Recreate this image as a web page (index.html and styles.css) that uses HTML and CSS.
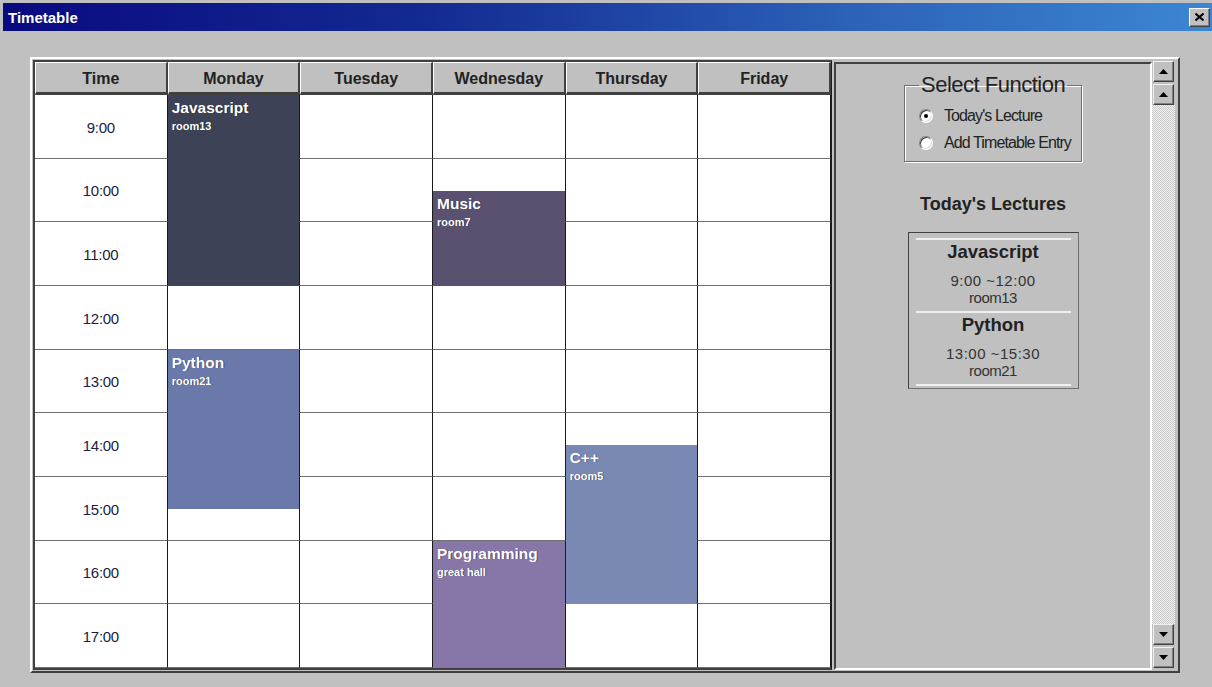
FILE: index.html
```html
<!DOCTYPE html>
<html lang="en">
<head>
    <meta charset="UTF-8">
    <title>Timetable</title>
    <link rel="stylesheet" href="styles.css">
</head>
<body>
    <div class="titlebar">
        <span class="title">Timetable</span>
        <div class="close">
            <svg width="9" height="8" viewBox="0 0 9 8"><path d="M0.5 0.5 L8.5 7.5 M8.5 0.5 L0.5 7.5" stroke="#000" stroke-width="2"/></svg>
        </div>
    </div>

    <div class="client">
        <div class="frame">
            <div class="timetable">
                <div class="tt-head">
                    <div>Time</div>
                    <div>Monday</div>
                    <div>Tuesday</div>
                    <div>Wednesday</div>
                    <div>Thursday</div>
                    <div>Friday</div>
                </div>
                <div class="tt-body">
                    <div class="tt-cells">
                        <div class="time">9:00</div><div></div><div></div><div></div><div></div><div></div>
                        <div class="time">10:00</div><div></div><div></div><div></div><div></div><div></div>
                        <div class="time">11:00</div><div></div><div></div><div></div><div></div><div></div>
                        <div class="time">12:00</div><div></div><div></div><div></div><div></div><div></div>
                        <div class="time">13:00</div><div></div><div></div><div></div><div></div><div></div>
                        <div class="time">14:00</div><div></div><div></div><div></div><div></div><div></div>
                        <div class="time">15:00</div><div></div><div></div><div></div><div></div><div></div>
                        <div class="time">16:00</div><div></div><div></div><div></div><div></div><div></div>
                        <div class="time">17:00</div><div></div><div></div><div></div><div></div><div></div>
                    </div>
                    <!-- events: rows are half hours, 9:00 = line 1 -->
                    <div class="tt-events">
                        <div class="event ev-js">
                            <div class="ev-name">Javascript</div>
                            <div class="ev-room">room13</div>
                        </div>
                        <div class="event ev-music">
                            <div class="ev-name">Music</div>
                            <div class="ev-room">room7</div>
                        </div>
                        <div class="event ev-python">
                            <div class="ev-name">Python</div>
                            <div class="ev-room">room21</div>
                        </div>
                        <div class="event ev-cpp">
                            <div class="ev-name">C++</div>
                            <div class="ev-room">room5</div>
                        </div>
                        <div class="event ev-prog">
                            <div class="ev-name">Programming</div>
                            <div class="ev-room">great hall</div>
                        </div>
                    </div>
                </div>
            </div>

            <div class="side">
                <fieldset class="func">
                    <legend>Select Function</legend>
                    <div class="radio-row">
                        <span class="radio checked"></span>
                        <span>Today's Lecture</span>
                    </div>
                    <div class="radio-row">
                        <span class="radio"></span>
                        <span>Add Timetable Entry</span>
                    </div>
                </fieldset>

                <div class="today-title">Today's Lectures</div>

                <div class="lectures">
                    <div class="rule"></div>
                    <div class="lec">
                        <div class="lec-name">Javascript</div>
                        <div class="lec-time">9:00 ~12:00</div>
                        <div class="lec-room">room13</div>
                    </div>
                    <div class="rule"></div>
                    <div class="lec">
                        <div class="lec-name">Python</div>
                        <div class="lec-time">13:00 ~15:30</div>
                        <div class="lec-room">room21</div>
                    </div>
                    <div class="rule"></div>
                </div>
            </div>

            <div class="scrollbar">
                <div class="sb-btn"><svg width="9" height="5" viewBox="0 0 9 5"><polygon points="0,5 4.5,0 9,5" fill="#000"/></svg></div>
                <div class="sb-btn"><svg width="9" height="5" viewBox="0 0 9 5"><polygon points="0,5 4.5,0 9,5" fill="#000"/></svg></div>
                <div class="sb-track"></div>
                <div class="sb-btn"><svg width="9" height="5" viewBox="0 0 9 5"><polygon points="0,0 9,0 4.5,5" fill="#000"/></svg></div>
                <div class="sb-btn"><svg width="9" height="5" viewBox="0 0 9 5"><polygon points="0,0 9,0 4.5,5" fill="#000"/></svg></div>
            </div>
        </div>
    </div>
</body>
</html>
```

FILE: styles.css
```css
* {
    margin: 0;
    padding: 0;
    box-sizing: border-box;
}

body {
    width: 1212px;
    height: 687px;
    overflow: hidden;
    background: #c0c0c0;
    padding: 3px 0 0 3px;
    font-family: 'Liberation Sans', Arial, sans-serif;
    color: #1e1e1e;
}

/* window title */
.titlebar {
    height: 28px;
    display: flex;
    align-items: center;
    justify-content: space-between;
    padding: 0 2px 0 5px;
    background: linear-gradient(90deg, #0a0a80 0%, #132a92 35%, #2c62b8 70%, #3c86d2 100%);
    color: #fff;
}

.title {
    font-weight: bold;
    font-size: 15px;
}

.close {
    width: 21px;
    height: 19px;
    background: #c0c0c0;
    border: 1px solid;
    border-color: #fff #404040 #404040 #fff;
    box-shadow: inset -1px -1px 0 #808080;
    display: flex;
    align-items: center;
    justify-content: center;
}

.client {
    padding: 26px 0 0 27px;
}

.frame {
    display: flex;
    width: 1150px;
    border: 2px solid;
    border-color: #fff #404040 #404040 #fff;
    padding: 1px;
}

/* timetable grid */
.timetable {
    width: 799px;
    background: #fff;
    border-top: 2px solid #404040;
    border-left: 2px solid #404040;
    border-right: 1px solid #1a1a1a;
    border-bottom: 2px solid #404040;
}

.tt-head {
    display: grid;
    grid-template-columns: repeat(6, 1fr);
    height: 33px;
}

.tt-head div {
    background: #c0c0c0;
    border-style: solid;
    border-width: 1px 2px 3px 1px;
    border-color: #fff #404040 #404040 #fff;
    padding-top: 3px;
    display: flex;
    align-items: center;
    justify-content: center;
    font-weight: bold;
    font-size: 16px;
    color: #222;
}

.tt-body {
    position: relative;
    height: 573px;
}

.tt-cells {
    display: grid;
    grid-template-columns: repeat(6, 1fr);
    grid-template-rows: repeat(9, 1fr);
    height: 100%;
}

.tt-cells div {
    border-right: 1px solid #1a1a1a;
    border-bottom: 1px solid #707070;
}

.tt-cells .time {
    display: flex;
    align-items: center;
    justify-content: center;
    padding-top: 2px;
    font-size: 15px;
    color: #1c1c3c;
    letter-spacing: -0.3px;
}

.tt-events {
    position: absolute;
    inset: 0;
    display: grid;
    grid-template-columns: repeat(6, 1fr);
    grid-template-rows: repeat(18, 1fr);
}

.event {
    margin-right: 1px;
    padding: 4px 4px;
    color: #fff;
    text-shadow: 1px 0 0 rgba(0, 0, 0, 0.45);
}

.ev-name {
    font-weight: bold;
    font-size: 15.5px;
    line-height: 18px;
}

.ev-room {
    margin-top: 2px;
    font-weight: bold;
    font-size: 11px;
    line-height: 14px;
}

.ev-js     { grid-column: 2; grid-row: 1 / 7;   background: #3d4256; }
.ev-music  { grid-column: 4; grid-row: 4 / 7;   background: #5a5070; }
.ev-python { grid-column: 2; grid-row: 9 / 14;  background: #6a79aa; }
.ev-cpp    { grid-column: 5; grid-row: 12 / 17; background: #7a89b4; }
.ev-prog   { grid-column: 4; grid-row: 15 / 19; background: #8677a8; }

/* right panel */
.side {
    width: 318px;
    height: 608px;
    margin: 2px 0 0 2px;
    border: 2px solid;
    border-color: #404040 #fff #fff #404040;
    display: flex;
    flex-direction: column;
    align-items: center;
}

.func {
    width: 178px;
    margin-top: 9px;
    padding: 9px 0 8px 14px;
    border: 1px solid #707070;
    box-shadow: inset 1px 1px 0 #fff, 1px 1px 0 #fff;
    color: #222;
    white-space: nowrap;
}

.func legend {
    padding: 0 2px;
    font-size: 22px;
    line-height: 24px;
    letter-spacing: -0.5px;
}

.radio-row {
    display: flex;
    align-items: center;
    height: 20px;
    font-size: 16px;
    letter-spacing: -0.9px;
}

.radio-row + .radio-row {
    margin-top: 7px;
}

.radio {
    width: 14px;
    height: 14px;
    margin-right: 11px;
    flex-shrink: 0;
    border-radius: 50%;
    background: #fff;
    border: 1px solid;
    border-color: #808080 #fff #fff #808080;
    box-shadow: inset 1px 1px 0 #404040, inset -1px -1px 0 #dfdfdf;
    display: flex;
    align-items: center;
    justify-content: center;
}

.radio.checked::after {
    content: "";
    width: 4px;
    height: 4px;
    border-radius: 50%;
    background: #000;
}

.today-title {
    margin-top: 32px;
    font-weight: bold;
    font-size: 18px;
    line-height: 20px;
    color: #222;
}

.lectures {
    width: 171px;
    margin-top: 18px;
    padding: 5px 7px 2px;
    border: 1px solid;
    border-color: #404040 #707070 #707070 #404040;
    text-align: center;
}

.rule {
    height: 2px;
    background: #f0f0f0;
}

.lec {
    padding: 1px 0 5px;
}

.lec-name {
    font-weight: bold;
    font-size: 18.5px;
    line-height: 22px;
    color: #222;
}

.lec-time {
    margin-top: 9px;
    font-size: 15px;
    line-height: 17px;
    letter-spacing: 0.5px;
    color: #333;
}

.lec-room {
    font-size: 15px;
    line-height: 17px;
    letter-spacing: -0.5px;
    color: #333;
}

/* scrollbar */
.scrollbar {
    width: 23px;
    height: 607px;
    margin-top: 1px;
    display: flex;
    flex-direction: column;
}

.sb-btn {
    width: 21px;
    height: 21px;
    margin-left: 1px;
    flex-shrink: 0;
    background: #c0c0c0;
    border: 1px solid;
    border-color: #f0f0f0 #404040 #404040 #f0f0f0;
    box-shadow: inset -1px -1px 0 #808080;
    display: flex;
    align-items: center;
    justify-content: center;
}

.sb-btn + .sb-btn {
    margin-top: 2px;
}

.sb-track {
    flex: 1;
    background: repeating-conic-gradient(#c8c8c8 0 25%, #f2f2f2 0 50%) 0 0 / 2px 2px;
}
```
